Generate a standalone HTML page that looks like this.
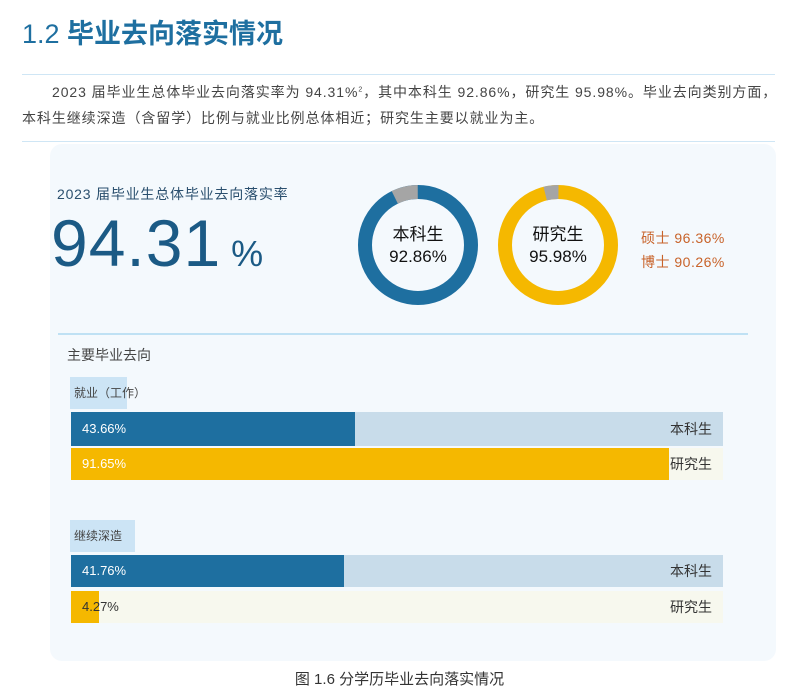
<!DOCTYPE html>
<html><head><meta charset="utf-8"><style>
*{margin:0;padding:0;box-sizing:border-box}
body{width:799px;height:687px;background:#fff;position:relative;font-family:"Liberation Sans","Noto Sans CJK SC",sans-serif;overflow:hidden;color:#333}
.a{position:absolute;white-space:nowrap}
.hr{position:absolute;left:22px;width:753px;height:1px;background:#cfe6f5}
.panel{position:absolute;left:50px;top:144px;width:726px;height:517px;background:#f4f9fd;border-radius:12px}
.track{position:absolute;left:71px;width:652px}
.fill{position:absolute;left:0;top:0;bottom:0}
.bt{position:absolute;font-size:13px;line-height:32px}
</style></head><body>
<div class="a" style="left:22px;top:12px;font-size:27px;color:#1e6fa0;font-weight:bold"><span style="font-weight:normal">1.2 </span>毕业去向落实情况</div>
<div class="hr" style="top:74px"></div>
<div class="a" style="left:52px;top:82px;font-size:14px;color:#444;letter-spacing:0.92px">2023 届毕业生总体毕业去向落实率为 94.31%<sup style="font-size:7px">2</sup>，其中本科生 92.86%，研究生 95.98%。毕业去向类别方面，</div>
<div class="a" style="left:22px;top:108px;font-size:14px;color:#444;letter-spacing:0.92px">本科生继续深造（含留学）比例与就业比例总体相近；研究生主要以就业为主。</div>
<div class="hr" style="top:141px"></div>
<div class="panel"></div>
<div class="a" style="left:57px;top:184px;font-size:14px;color:#2a4f6e;letter-spacing:0.8px">2023 届毕业生总体毕业去向落实率</div>
<div class="a" style="left:51px;top:205px;font-size:66px;color:#1b5a85;line-height:76px;letter-spacing:1px">94.31<span style="font-size:36px;margin-left:10px">%</span></div>
<svg class="a" style="left:350px;top:177px" width="280" height="136">
<g transform="translate(68,68)">
<circle r="53" fill="none" stroke="#1e6fa0" stroke-width="14"/>
<circle r="53" fill="none" stroke="#a5a5a5" stroke-width="14" stroke-dasharray="23.8 400" transform="rotate(-116)"/>
</g>
<g transform="translate(208,68)">
<circle r="53" fill="none" stroke="#f5b800" stroke-width="14"/>
<circle r="53" fill="none" stroke="#a5a5a5" stroke-width="14" stroke-dasharray="13.4 400" transform="rotate(-104)"/>
</g>
</svg>
<div class="a" style="left:378px;top:224px;width:80px;text-align:center;font-size:17px;line-height:22px;color:#111">本科生<br>92.86%</div>
<div class="a" style="left:518px;top:224px;width:80px;text-align:center;font-size:17px;line-height:22px;color:#111">研究生<br>95.98%</div>
<div class="a" style="left:641px;top:226px;font-size:14px;line-height:24px;color:#c8632a;letter-spacing:0.5px">硕士 96.36%<br>博士 90.26%</div>
<div class="a" style="left:58px;top:333px;width:690px;height:2px;background:#bfe1f4"></div>
<div class="a" style="left:67px;top:345px;font-size:14px;color:#444">主要毕业去向</div>
<div class="a" style="left:70px;top:377px;width:57px;height:32px;background:#cce4f5;font-size:12px;line-height:32px;padding-left:4px;color:#444">就业（工作）</div>
<div class="track" style="top:412px;height:34px;background:#c8dcea"><div class="fill" style="width:284px;background:#1e6fa0"></div></div>
<div class="bt" style="left:82px;top:413px;color:#fff">43.66%</div>
<div class="bt" style="left:670px;top:413px;font-size:14px;color:#333">本科生</div>
<div class="track" style="top:448px;height:32px;background:#f7f8ee"><div class="fill" style="width:598px;background:#f5b800"></div></div>
<div class="bt" style="left:82px;top:448px;color:#fff">91.65%</div>
<div class="bt" style="left:670px;top:448px;font-size:14px;color:#333">研究生</div>
<div class="a" style="left:70px;top:520px;width:65px;height:32px;background:#cce4f5;font-size:12px;line-height:32px;padding-left:4px;color:#444">继续深造</div>
<div class="track" style="top:555px;height:32px;background:#c8dcea"><div class="fill" style="width:273px;background:#1e6fa0"></div></div>
<div class="bt" style="left:82px;top:555px;color:#fff">41.76%</div>
<div class="bt" style="left:670px;top:555px;font-size:14px;color:#333">本科生</div>
<div class="track" style="top:591px;height:32px;background:#f7f8ee"><div class="fill" style="width:28px;background:#f5b800"></div></div>
<div class="bt" style="left:82px;top:591px;color:#333">4.27%</div>
<div class="bt" style="left:670px;top:591px;font-size:14px;color:#333">研究生</div>
<div class="a" style="left:0;width:799px;text-align:center;top:668px;font-size:15px;color:#333">图 1.6 分学历毕业去向落实情况</div>
</body></html>
